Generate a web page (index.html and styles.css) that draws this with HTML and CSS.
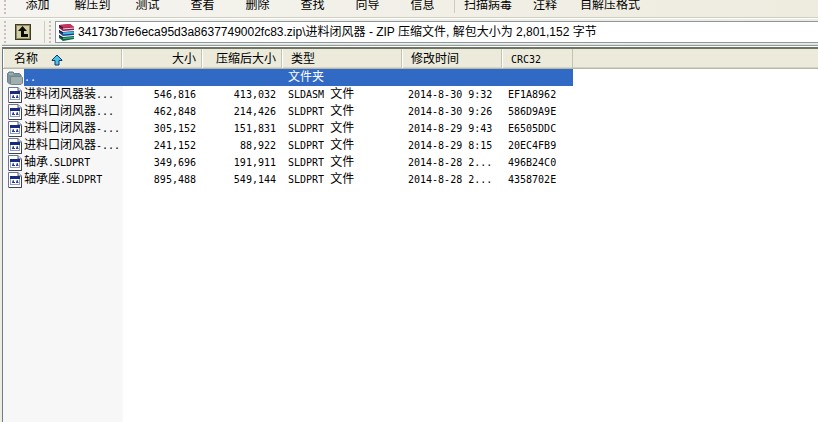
FILE: index.html
```html
<!DOCTYPE html>
<html lang="zh-CN">
<head>
    <meta charset="UTF-8">
    <meta name="viewport" content="width=device-width, initial-scale=1.0">
    <title>WinRAR</title>
    <link rel="stylesheet" href="styles.css">
</head>
<body>
<!-- shared icons -->
<svg class="defs" width="0" height="0">
    <symbol id="icon-file" viewBox="0 0 14 16">
        <path d="M0.5 0.5H10L13.5 4V15.5H0.5Z" fill="#fff" stroke="#6d7590"/>
        <path d="M10 0.5V4H13.5" fill="#dde" stroke="#555c78"/>
        <rect x="2.5" y="4.5" width="9" height="8" fill="#fff" stroke="#8d9cc4"/>
        <rect x="2" y="4" width="10" height="3" fill="#152a80"/>
        <path d="M4 9.5L5.5 8.5V11M4 10.5H7M8 9.5L9.5 8.5V11M8 10.5H10.5" fill="none" stroke="#2b3f98"/>
        <path d="M13.5 5V15.5H1" fill="none" stroke="#3d4154"/>
    </symbol>
    <symbol id="icon-folder" viewBox="0 0 16 14">
        <path d="M0.5 11V2.5L2 1H6L7.5 2.5H12.5L14 4V12L12.5 13H2.5Z" fill="#7f969b" stroke="#6b8087"/>
        <path d="M3.5 5.5H14.5L15.5 6.5V12L14 13.5H4.5L3.5 12.5Z" fill="#a0b0ae" stroke="#71878b"/>
        <path d="M2 3h4" stroke="#b8c6c5"/>
    </symbol>
</svg>

<div class="window">
    <div class="toolbar">
        <span class="grip"></span>
        <button type="button">添加</button>
        <button type="button">解压到</button>
        <button type="button">测试</button>
        <button type="button">查看</button>
        <button type="button">删除</button>
        <button type="button">查找</button>
        <button type="button">向导</button>
        <button type="button">信息</button>
        <span class="separator"></span>
        <button type="button" class="fit">扫描病毒</button>
        <button type="button" class="fit">注释</button>
        <button type="button" class="fit">自解压格式</button>
    </div>

    <div class="address-bar">
        <span class="grip"></span>
        <button type="button" class="up-btn" aria-label="向上">
            <svg width="16" height="16" viewBox="0 0 16 16">
                <rect width="16" height="16" fill="#3c3a22"/>
                <rect x="1" y="1" width="14" height="14" fill="#8c8962"/>
                <rect x="2" y="2" width="12" height="12" fill="#d2cfa4"/>
                <path d="M7.5 2L12 7H9V10H13V13H6V7H3Z" fill="#0c0c08"/>
            </svg>
        </button>
        <span class="separator"></span>
        <span class="grip"></span>
        <div class="address">
            <svg width="17" height="17" viewBox="0 0 17 17">
                <path d="M1 1L12 0L16 3V6L5 7L1 4Z" fill="#8e1b45"/>
                <path d="M1 1L12 0L16 3L5 4Z" fill="#c8325e"/>
                <path d="M5 5L16 4" stroke="#f2dfe3"/>
                <path d="M1 6L5 8L16 7V11L5 12L1 9Z" fill="#1d3f94"/>
                <path d="M5 9.5L16 8.5" stroke="#43b7dd" stroke-width="2"/>
                <path d="M1 11L5 13L16 12V15L5 17L1 14Z" fill="#0f6340"/>
                <path d="M5 14.5L16 13.5" stroke="#42b88b"/>
                <path d="M1 1.5L5 4M1 6.5L5 9M1 11.5L5 14" stroke="#191527"/>
            </svg>
            <input type="text" aria-label="地址" value="34173b7fe6eca95d3a8637749002fc83.zip\进料闭风器 - ZIP 压缩文件, 解包大小为 2,801,152 字节">
        </div>
    </div>

    <div class="file-list">
        <table>
            <colgroup>
                <col class="col-name">
                <col class="col-size">
                <col class="col-size">
                <col class="col-type">
                <col class="col-date">
                <col class="col-crc">
                <col>
            </colgroup>
            <thead>
                <tr>
                    <th>
                        <div class="sort">
                            名称
                            <svg width="12" height="12" viewBox="0 0 12 12">
                                <path d="M6 1L11 6V6.5H8V11H4V6.5H1V6Z" fill="#48c4ea" stroke="#12366f"/>
                            </svg>
                        </div>
                    </th>
                    <th class="right">大小</th>
                    <th class="right">压缩后大小</th>
                    <th>类型</th>
                    <th>修改时间</th>
                    <th class="latin">CRC32</th>
                    <th class="filler"></th>
                </tr>
            </thead>
            <tbody>
                <tr class="selected">
                    <td><div class="name"><svg class="folder" width="16" height="14"><use href="#icon-folder"/></svg><span>..</span></div></td>
                    <td></td>
                    <td></td>
                    <td><span class="cn">文件夹</span></td>
                    <td></td>
                    <td></td>
                    <td class="filler"></td>
                </tr>
                <tr>
                    <td><div class="name"><svg width="14" height="16"><use href="#icon-file"/></svg><span><span class="cn">进料闭风器装</span>...</span></div></td>
                    <td class="right">546,816</td>
                    <td class="right">413,032</td>
                    <td>SLDASM <span class="cn">文件</span></td>
                    <td>2014-8-30 9:32</td>
                    <td>EF1A8962</td>
                    <td class="filler"></td>
                </tr>
                <tr>
                    <td><div class="name"><svg width="14" height="16"><use href="#icon-file"/></svg><span><span class="cn">进料口闭风器</span>...</span></div></td>
                    <td class="right">462,848</td>
                    <td class="right">214,426</td>
                    <td>SLDPRT <span class="cn">文件</span></td>
                    <td>2014-8-30 9:26</td>
                    <td>586D9A9E</td>
                    <td class="filler"></td>
                </tr>
                <tr>
                    <td><div class="name"><svg width="14" height="16"><use href="#icon-file"/></svg><span><span class="cn">进料口闭风器</span>-...</span></div></td>
                    <td class="right">305,152</td>
                    <td class="right">151,831</td>
                    <td>SLDPRT <span class="cn">文件</span></td>
                    <td>2014-8-29 9:43</td>
                    <td>E6505DDC</td>
                    <td class="filler"></td>
                </tr>
                <tr>
                    <td><div class="name"><svg width="14" height="16"><use href="#icon-file"/></svg><span><span class="cn">进料口闭风器</span>-...</span></div></td>
                    <td class="right">241,152</td>
                    <td class="right">88,922</td>
                    <td>SLDPRT <span class="cn">文件</span></td>
                    <td>2014-8-29 8:15</td>
                    <td>20EC4FB9</td>
                    <td class="filler"></td>
                </tr>
                <tr>
                    <td><div class="name"><svg width="14" height="16"><use href="#icon-file"/></svg><span><span class="cn">轴承</span>.SLDPRT</span></div></td>
                    <td class="right">349,696</td>
                    <td class="right">191,911</td>
                    <td>SLDPRT <span class="cn">文件</span></td>
                    <td>2014-8-28 2...</td>
                    <td>496B24C0</td>
                    <td class="filler"></td>
                </tr>
                <tr>
                    <td><div class="name"><svg width="14" height="16"><use href="#icon-file"/></svg><span><span class="cn">轴承座</span>.SLDPRT</span></div></td>
                    <td class="right">895,488</td>
                    <td class="right">549,144</td>
                    <td>SLDPRT <span class="cn">文件</span></td>
                    <td>2014-8-28 2...</td>
                    <td>4358702E</td>
                    <td class="filler"></td>
                </tr>
            </tbody>
        </table>
    </div>
</div>
</body>
</html>
```

FILE: styles.css
```css
* {
    box-sizing: border-box;
}

body {
    margin: 0;
    font-family: "Liberation Sans", "Noto Sans CJK SC", sans-serif;
    font-size: 12px;
    color: #000;
    background-color: #efede3;
}

button {
    padding: 0;
    border: none;
    background: none;
    font: inherit;
    color: inherit;
}

svg {
    display: block;
    flex: none;
}

.defs {
    position: absolute;
}

.window {
    display: flex;
    flex-direction: column;
    min-height: 100vh;
}

.grip {
    flex: none;
    width: 2px;
    margin: 0 4px;
    align-self: stretch;
    background: repeating-linear-gradient(#cbbfba 0 2px, transparent 2px 4px);
}

.separator {
    flex: none;
    width: 1px;
    align-self: stretch;
    background-color: #cfccbe;
}

/* Toolbar */
.toolbar {
    display: flex;
    align-items: flex-end;
    height: 18px;
    overflow: hidden;
    border-bottom: 1px solid #cdcfc0;
    background: linear-gradient(to right, #f5f4f0, #eeecdf);
}

.toolbar .grip {
    margin-bottom: 2px;
}

.toolbar button {
    flex: none;
    width: 55px;
    padding-bottom: 4px;
    line-height: 16px;
    white-space: nowrap;
}

.toolbar .separator {
    margin: 0 4px 4px;
}

.toolbar button.fit {
    width: auto;
    padding: 0 5px 4px;
}

.toolbar button.fit + .fit {
    padding: 0 16px 4px;
}

.toolbar button.fit + .fit + .fit {
    padding: 0 7px 4px;
}

/* Address bar */
.address-bar {
    display: flex;
    align-items: center;
    height: 29px;
    padding: 2px 0 4px;
    border-top: 1px solid #fff;
    background: linear-gradient(to right, #f3f2ec, #eceae0);
}

.up-btn {
    margin: 0 13px 0 5px;
}

.address {
    display: flex;
    flex: 1;
    align-items: center;
    gap: 3px;
    height: 22px;
    padding-left: 2px;
    border: 1px solid #8d989f;
    border-right: none;
    background-color: #fff;
}

.address input {
    flex: 1;
    min-width: 0;
    padding: 0;
    border: none;
    outline: none;
    font: inherit;
    line-height: 18px;
    background: none;
}

/* File list */
.file-list {
    flex: 1;
    margin-left: 2px;
    border-left: 1px solid #6d7d85;
    border-top: 2px solid #6e7462;
    box-shadow: 0 -1px 0 #fff, 0 -2px 0 #8f9c9d, 0 -3px 0 #dbe1df;
    background: linear-gradient(to right, #f7f7f7 120px, #fff 120px);
}

table {
    width: 100%;
    table-layout: fixed;
    border-collapse: separate;
    border-spacing: 0;
}

.col-name {
    width: 119px;
}

.col-size {
    width: 80px;
}

.col-type {
    width: 120px;
}

.col-date {
    width: 100px;
}

.col-crc {
    width: 71px;
}

th {
    height: 20px;
    padding: 2px 5px 0 9px;
    border-right: 1px solid #c5c2b2;
    border-bottom: 1px solid #b9b8a5;
    box-shadow: inset 1px 0 0 #fff, inset 0 -1px 0 #d6d3c2;
    background-color: #ebeadb;
    font-weight: normal;
    line-height: 17px;
    text-align: left;
    white-space: nowrap;
}

th.filler {
    border-right: none;
    box-shadow: inset 0 -1px 0 #d6d3c2;
}

.sort {
    display: flex;
    align-items: center;
    gap: 13px;
    padding-left: 2px;
}

td {
    height: 17px;
    padding: 0 6px;
    line-height: 17px;
    white-space: nowrap;
}

td,
.latin {
    font-family: "DejaVu Sans Mono", "Noto Sans CJK SC", monospace;
    font-size: 10px;
}

td:first-child {
    padding: 0;
}

.right {
    text-align: right;
}

.cn {
    font-family: "Noto Sans CJK SC", sans-serif;
    font-size: 12px;
    line-height: 1;
}

.name {
    display: flex;
    align-items: center;
    gap: 2px;
    height: 17px;
    padding-left: 5px;
}

.name > span {
    flex: 1;
}

.name .folder {
    margin: 0 -1px;
}

.selected td:not(.filler) {
    background-color: #316ac5;
    color: #fff;
}

.selected td:first-child {
    background: linear-gradient(to right, #f7f7f7 21px, #316ac5 21px);
}
```
